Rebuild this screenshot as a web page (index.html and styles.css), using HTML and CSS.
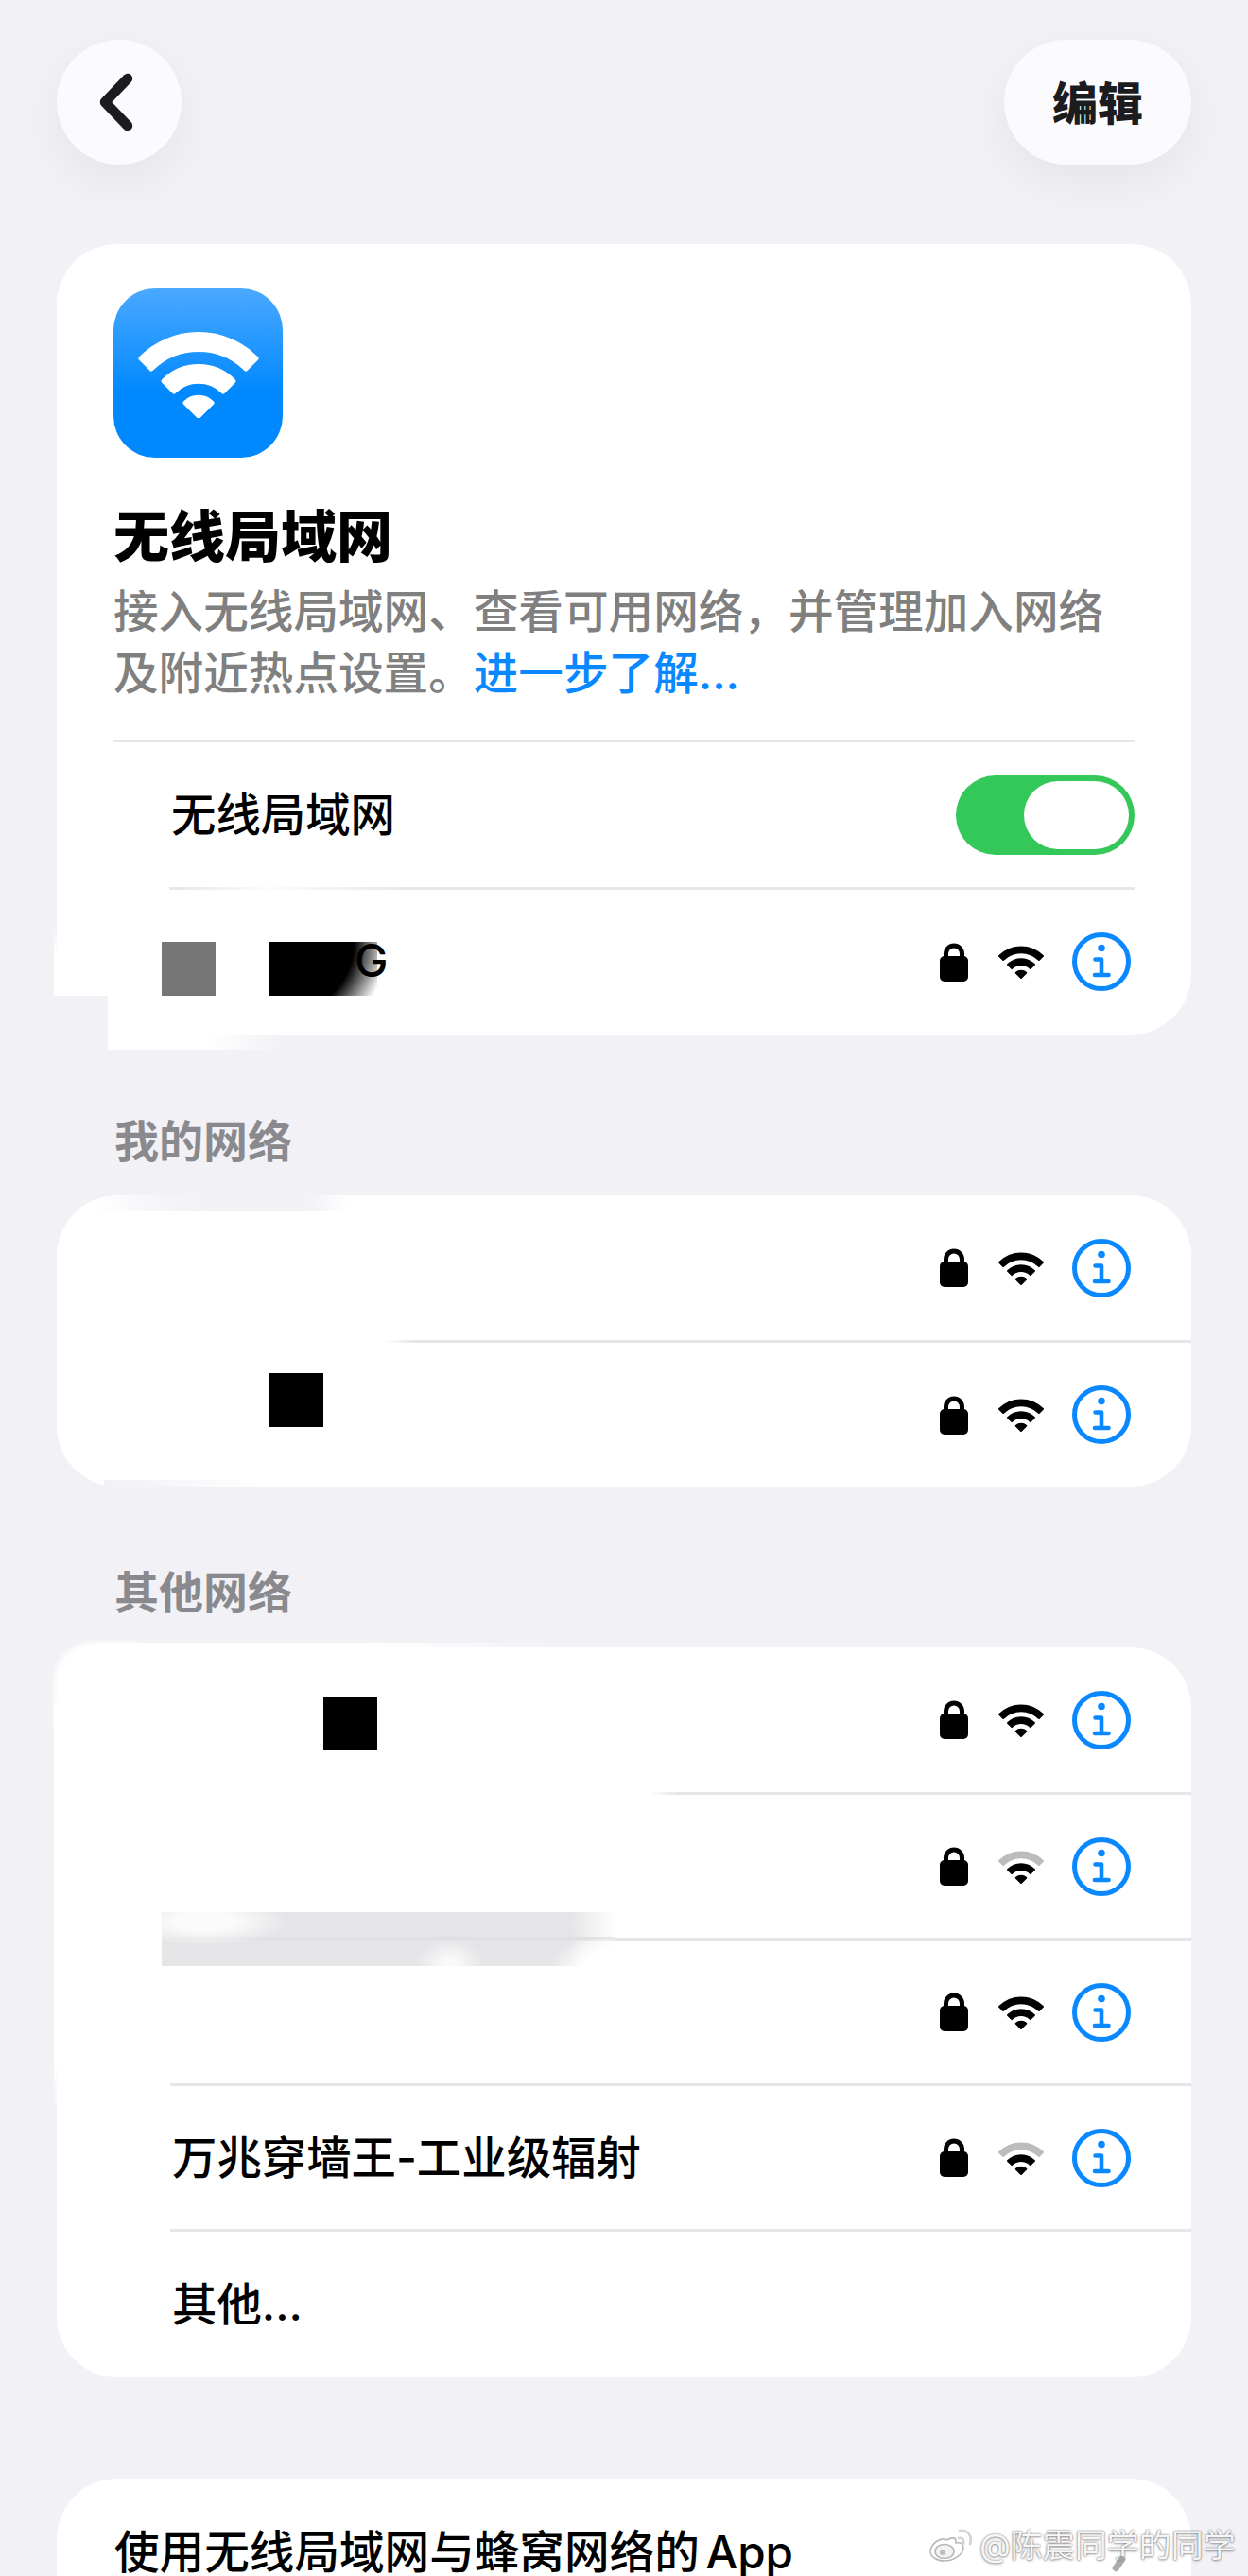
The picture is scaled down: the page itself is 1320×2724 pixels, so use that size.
FILE: index.html
```html
<!DOCTYPE html>
<html lang="zh-CN">
<head>
<meta charset="utf-8">
<title>无线局域网</title>
<link rel="stylesheet" href="styles.css">
</head>
<body>
<svg class="defs" width="0" height="0" aria-hidden="true">
  <defs>
    <symbol id="lock" viewBox="0 0 30 41">
      <path d="M6.5 16V11.5a8.5 8.5 0 0 1 17 0V16" fill="none" stroke="currentColor" stroke-width="5"/>
      <rect x="0" y="14" width="30" height="27" rx="5" fill="currentColor"/>
    </symbol>
    <symbol id="info" viewBox="0 0 62 62">
      <circle cx="31" cy="31" r="28.5" fill="none" stroke="currentColor" stroke-width="5"/>
      <circle cx="31" cy="16.5" r="3.8" fill="currentColor"/>
      <path d="M24.5 28.5H31V45M24 45H38.5" fill="none" stroke="currentColor" stroke-width="4.6" stroke-linecap="round" stroke-linejoin="round"/>
    </symbol>
  </defs>
</svg>

<main class="page">
  <header class="top">
    <button class="round-btn back" aria-label="返回">
      <svg class="chevron" viewBox="0 0 40 64"><path d="M33 7 9 32l24 25" fill="none" stroke="#1c1c1e" stroke-width="10.5" stroke-linecap="round" stroke-linejoin="round"/></svg>
    </button>
    <button class="round-btn edit">编辑</button>
  </header>

  <section class="card intro">
    <div class="intro-head">
      <div class="app-icon">
        <svg class="app-wifi" viewBox="-66 -92 132 94">
          <path class="fan" d="M-61-61A86 86 0 0 1 61-61L50-50A71 71 0 0 0-50-50Z"/>
          <path class="fan" d="M-37-37A52 52 0 0 1 37-37L26-26A37 37 0 0 0-26-26Z"/>
          <path class="fan" d="M-14-14A20 20 0 0 1 14-14L0 0Z"/>
        </svg>
      </div>
      <h1 class="title">无线局域网</h1>
      <p class="desc">接入无线局域网、查看可用网络，并管理加入网络<br>及附近热点设置。<a class="more">进一步了解...</a></p>
    </div>
    <div class="row row-toggle">
      <span class="name">无线局域网</span>
      <span class="toggle"><span class="knob"></span></span>
    </div>
    <div class="row row-current">
      <span class="name name-g">G</span>
      <span class="status">
        <svg class="lock"><use href="#lock"/></svg>
        <svg class="wifi" viewBox="-66 -92 132 94"><path class="bar" d="M-61-61A86 86 0 0 1 61-61L50-50A71 71 0 0 0-50-50Z"/><path class="bar" d="M-37-37A52 52 0 0 1 37-37L26-26A37 37 0 0 0-26-26Z"/><path class="bar" d="M-14-14A20 20 0 0 1 14-14L0 0Z"/></svg>
        <svg class="info"><use href="#info"/></svg>
      </span>
    </div>
    <i class="patch c1-strip"></i>
    <i class="patch c1-notch"></i>
    <i class="patch c1-tail"></i>
    <i class="patch c1-line"></i>
    <i class="patch block-gray"></i>
    <i class="patch block-fade"></i>
  </section>

  <h2 class="label">我的网络</h2>
  <section class="card list">
    <div class="row">
      <span class="name"></span>
      <span class="status">
        <svg class="lock"><use href="#lock"/></svg>
        <svg class="wifi" viewBox="-66 -92 132 94"><path class="bar" d="M-61-61A86 86 0 0 1 61-61L50-50A71 71 0 0 0-50-50Z"/><path class="bar" d="M-37-37A52 52 0 0 1 37-37L26-26A37 37 0 0 0-26-26Z"/><path class="bar" d="M-14-14A20 20 0 0 1 14-14L0 0Z"/></svg>
        <svg class="info"><use href="#info"/></svg>
      </span>
    </div>
    <div class="row row-end">
      <span class="name"></span>
      <span class="status">
        <svg class="lock"><use href="#lock"/></svg>
        <svg class="wifi" viewBox="-66 -92 132 94"><path class="bar" d="M-61-61A86 86 0 0 1 61-61L50-50A71 71 0 0 0-50-50Z"/><path class="bar" d="M-37-37A52 52 0 0 1 37-37L26-26A37 37 0 0 0-26-26Z"/><path class="bar" d="M-14-14A20 20 0 0 1 14-14L0 0Z"/></svg>
        <svg class="info"><use href="#info"/></svg>
      </span>
    </div>
    <i class="patch c2-top"></i>
    <i class="patch c2-bottom"></i>
    <i class="patch c2-line"></i>
    <i class="patch c2-block"></i>
  </section>

  <h2 class="label label-other">其他网络</h2>
  <section class="card list">
    <div class="row">
      <span class="name"></span>
      <span class="status">
        <svg class="lock"><use href="#lock"/></svg>
        <svg class="wifi" viewBox="-66 -92 132 94"><path class="bar" d="M-61-61A86 86 0 0 1 61-61L50-50A71 71 0 0 0-50-50Z"/><path class="bar" d="M-37-37A52 52 0 0 1 37-37L26-26A37 37 0 0 0-26-26Z"/><path class="bar" d="M-14-14A20 20 0 0 1 14-14L0 0Z"/></svg>
        <svg class="info"><use href="#info"/></svg>
      </span>
    </div>
    <div class="row">
      <span class="name"></span>
      <span class="status">
        <svg class="lock"><use href="#lock"/></svg>
        <svg class="wifi" viewBox="-66 -92 132 94"><path class="bar dim" d="M-61-61A86 86 0 0 1 61-61L50-50A71 71 0 0 0-50-50Z"/><path class="bar" d="M-37-37A52 52 0 0 1 37-37L26-26A37 37 0 0 0-26-26Z"/><path class="bar" d="M-14-14A20 20 0 0 1 14-14L0 0Z"/></svg>
        <svg class="info"><use href="#info"/></svg>
      </span>
    </div>
    <div class="row">
      <span class="name"></span>
      <span class="status">
        <svg class="lock"><use href="#lock"/></svg>
        <svg class="wifi" viewBox="-66 -92 132 94"><path class="bar" d="M-61-61A86 86 0 0 1 61-61L50-50A71 71 0 0 0-50-50Z"/><path class="bar" d="M-37-37A52 52 0 0 1 37-37L26-26A37 37 0 0 0-26-26Z"/><path class="bar" d="M-14-14A20 20 0 0 1 14-14L0 0Z"/></svg>
        <svg class="info"><use href="#info"/></svg>
      </span>
    </div>
    <div class="row">
      <span class="name">万兆穿墙王-工业级辐射</span>
      <span class="status">
        <svg class="lock"><use href="#lock"/></svg>
        <svg class="wifi" viewBox="-66 -92 132 94"><path class="bar dim" d="M-61-61A86 86 0 0 1 61-61L50-50A71 71 0 0 0-50-50Z"/><path class="bar" d="M-37-37A52 52 0 0 1 37-37L26-26A37 37 0 0 0-26-26Z"/><path class="bar" d="M-14-14A20 20 0 0 1 14-14L0 0Z"/></svg>
        <svg class="info"><use href="#info"/></svg>
      </span>
    </div>
    <div class="row row-other">
      <span class="name">其他...</span>
    </div>
    <i class="patch c3-corner"></i>
    <i class="patch c3-top"></i>
    <i class="patch c3-strip"></i>
    <i class="patch c3-line"></i>
    <i class="patch c3-block"></i>
    <i class="patch c3-gray"></i>
  </section>

  <section class="card apps">
    <p class="apps-title">使用无线局域网与蜂窝网络的 App</p>
  </section>

  <div class="watermark">
    <svg class="weibo" viewBox="0 0 48 40">
      <path d="M19 14c6-3 10-3 10 1 0 1 0 2 0 2 5-1 8 1 8 5 0 7-10 14-20 14C9 36 2 32 2 26c0-4 3-8 7-11 4-2 8-3 10-1Z" fill="#fff" stroke="#b9b9bc" stroke-width="1.6"/>
      <ellipse cx="17" cy="26" rx="10" ry="7.5" fill="#f2f2f3" stroke="#b9b9bc" stroke-width="1.6"/>
      <circle cx="15" cy="27" r="3" fill="#bdbdc0"/>
      <path d="M32 12c4-1 6 2 5 6M33 4c8-1 14 5 11 14" fill="none" stroke="#d3d3d6" stroke-width="2.6" stroke-linecap="round"/>
    </svg>
    <span class="wm-text">@陈震同学的同学</span>
    <i class="wm-smear"></i>
  </div>
</main>
</body>
</html>
```
FILE: styles.css
```css
* { box-sizing: border-box; }

html, body {
  margin: 0;
  background: #f1f1f6;
}

body {
  font-family: Inter, "Noto Sans CJK SC", "Noto Sans", sans-serif;
  color: #000;
}

.defs { position: absolute; }

.page {
  position: relative;
  width: 1320px;
  height: 2724px;
  padding: 42px 60px 0;
  overflow: hidden;
}

/* Toolbar */
.top {
  display: flex;
  justify-content: space-between;
  height: 132px;
  margin-bottom: 84px;
}

.round-btn {
  height: 132px;
  border: 0;
  border-radius: 66px;
  padding: 0;
  background: #fbfbfe;
  box-shadow: 0 18px 50px rgba(0, 0, 0, 0.055);
  display: flex;
  align-items: center;
  justify-content: center;
  font-family: inherit;
}

.back { width: 132px; }

.chevron {
  width: 40px;
  height: 64px;
  margin-left: -9px;
}

.edit {
  width: 198px;
  padding-top: 3px;
  font-size: 48px;
  font-weight: 900;
  color: #1c1c1e;
  line-height: 60px;
}

/* Cards */
.card {
  position: relative;
  width: 1200px;
  background: #fff;
  border-radius: 64px;
}

.intro { padding: 47px 60px 0; height: 836px; }

.app-icon {
  width: 179px;
  height: 179px;
  border-radius: 44px;
  background: linear-gradient(#4ba9ff 0, #0088ff 62%);
  display: flex;
  align-items: flex-start;
  justify-content: center;
  padding-top: 43px;
}

.app-wifi { width: 132px; height: 94px; }
.fan {
  fill: #fff;
  stroke: #fff;
  stroke-width: 5;
  stroke-linejoin: round;
}

.title {
  margin: 49px 0 0;
  font-size: 59px;
  line-height: 70px;
  font-weight: 900;
}

.desc {
  margin: 11px 0 38px;
  font-size: 47.6px;
  line-height: 65px;
  font-weight: 500;
  color: #808080;
  white-space: nowrap;
}

.more { color: #0a88ff; }

/* Rows */
.row {
  position: relative;
  display: flex;
  align-items: center;
  justify-content: space-between;
  height: 154px;
  margin-left: 120px;
  padding: 0 64px 0 2px;
  border-top: 3px solid #e6e6ea;
}

.row:first-child { height: 153px; border-top: 0; }
.row-end { height: 155px; }
.row-other { height: 157px; }

.intro .row {
  margin-left: 0;
  padding: 0 4px 0 61px;
}
.intro .row-toggle { height: 156px; }
.intro .row-current {
  height: 155px;
  margin-left: 59px;
  padding-left: 2px;
}

.name {
  position: relative;
  z-index: 2;
  font-size: 47.4px;
  font-weight: 500;
  line-height: 60px;
  white-space: nowrap;
}

.name-g {
  padding-left: 194px;
  top: -1px;
}

.status {
  display: flex;
  align-items: center;
  gap: 31px;
}

.lock { width: 30px; height: 41px; color: #000; }
.wifi { width: 50px; height: 36px; }
.bar {
  fill: #000;
  stroke: #000;
  stroke-width: 5;
  stroke-linejoin: round;
}
.bar.dim { fill: #bcbcbc; stroke: #bcbcbc; }
.info { width: 62px; height: 62px; margin-left: -2px; color: #0a88ff; }

.toggle {
  position: relative;
  width: 189px;
  height: 84px;
  margin-right: -4px;
  border-radius: 42px;
  background: #34c759;
}

.knob {
  position: absolute;
  top: 6px;
  right: 6px;
  width: 111px;
  height: 72px;
  border-radius: 36px;
  background: #fff;
}

.label {
  margin: 83px 0 27px 61px;
  font-size: 47px;
  line-height: 60px;
  font-weight: 700;
  color: #8a8a8e;
}

.label-other { margin-top: 82px; margin-bottom: 28px; }

/* Redaction patches laid over the rows */
.patch { position: absolute; display: block; }

.c1-strip {
  left: -3px;
  top: 720px;
  width: 60px;
  height: 75px;
  background: linear-gradient(transparent, #fff 45%);
}

.c1-notch {
  left: -3px;
  top: 795px;
  width: 57px;
  height: 50px;
  background: #f1f1f6;
}

.c1-tail {
  left: 54px;
  top: 760px;
  width: 190px;
  height: 92px;
  background: linear-gradient(to right, #fff 55%, rgba(255, 255, 255, 0));
}

.c1-line {
  left: 120px;
  top: 680px;
  width: 260px;
  height: 4px;
  background: linear-gradient(to right, transparent, rgba(255, 255, 255, 0.9) 40%, transparent);
}

.block-gray {
  left: 111px;
  top: 738px;
  width: 57px;
  height: 57px;
  background: #767676;
}

.block-fade {
  z-index: 1;
  left: 225px;
  top: 738px;
  width: 114px;
  height: 57px;
  background: radial-gradient(ellipse 126px 115px at 0 0, #000 71%, #fff 100%);
}

.c2-top {
  left: 40px;
  top: 0;
  width: 270px;
  height: 17px;
  background: linear-gradient(to right, rgba(241, 241, 246, 0), rgba(241, 241, 246, 0.6) 22%, #f1f1f6 45%, #f1f1f6 82%, rgba(241, 241, 246, 0));
}

.c2-bottom {
  left: 50px;
  top: 301px;
  width: 170px;
  height: 7px;
  background: linear-gradient(to right, #f1f1f6, rgba(241, 241, 246, 0));
}

.c2-line {
  left: 118px;
  top: 152px;
  width: 260px;
  height: 4px;
  background: linear-gradient(to right, #fff 88%, transparent);
}

.c2-block {
  left: 225px;
  top: 188px;
  width: 57px;
  height: 57px;
  background: #000;
}

.c3-corner {
  left: -3px;
  top: -5px;
  width: 90px;
  height: 90px;
  border-top-left-radius: 40px;
  background: #fff;
  filter: blur(3px);
}

.c3-top {
  left: 40px;
  top: -5px;
  width: 510px;
  height: 8px;
  background: linear-gradient(to right, #fff 56%, rgba(255, 255, 255, 0));
}

.c3-strip {
  left: -3px;
  top: 60px;
  width: 12px;
  height: 440px;
  background: linear-gradient(#fff 85%, rgba(255, 255, 255, 0));
}

.c3-line {
  left: 118px;
  top: 151px;
  width: 540px;
  height: 5px;
  background: linear-gradient(to right, #fff 94%, transparent);
}

.c3-block {
  left: 282px;
  top: 52px;
  width: 57px;
  height: 57px;
  background: #000;
}

.c3-gray {
  left: 111px;
  top: 280px;
  width: 480px;
  height: 57px;
  background:
    radial-gradient(ellipse 90px 26px at 45px 10px, rgba(255, 255, 255, 0.85) 35%, rgba(255, 255, 255, 0)),
    radial-gradient(ellipse 36px 26px at 305px 54px, rgba(255, 255, 255, 0.8) 15%, rgba(255, 255, 255, 0)),
    radial-gradient(ellipse 70px 34px at 100% 100%, #fff 45%, rgba(255, 255, 255, 0)),
    linear-gradient(#dfdfe2, #dfdfe2) no-repeat 9px 26px / 100% 3px,
    linear-gradient(to right, #e5e5e8 90%, rgba(229, 229, 232, 0));
}

.apps {
  margin-top: 107px;
  height: 180px;
  padding: 53px 61px 0;
}

.apps-title {
  margin: 0;
  font-size: 47.6px;
  font-weight: 500;
  line-height: 50px;
  word-spacing: -6px;
  white-space: nowrap;
}

/* Watermark */
.watermark {
  position: absolute;
  left: 982px;
  top: 2670px;
  display: flex;
  align-items: center;
  gap: 6px;
}

.weibo { width: 48px; height: 40px; }

.wm-text {
  font-size: 34px;
  line-height: 44px;
  white-space: nowrap;
  color: rgba(255, 255, 255, 0.95);
  text-shadow: 0 0 2px rgba(0, 0, 0, 0.55), 0 1px 3px rgba(0, 0, 0, 0.3);
}

.wm-smear {
  position: absolute;
  left: 198px;
  top: 32px;
  width: 7px;
  height: 18px;
  border-radius: 3px;
  transform: rotate(35deg);
  background: #8f8f92;
  opacity: 0.75;
}
```
